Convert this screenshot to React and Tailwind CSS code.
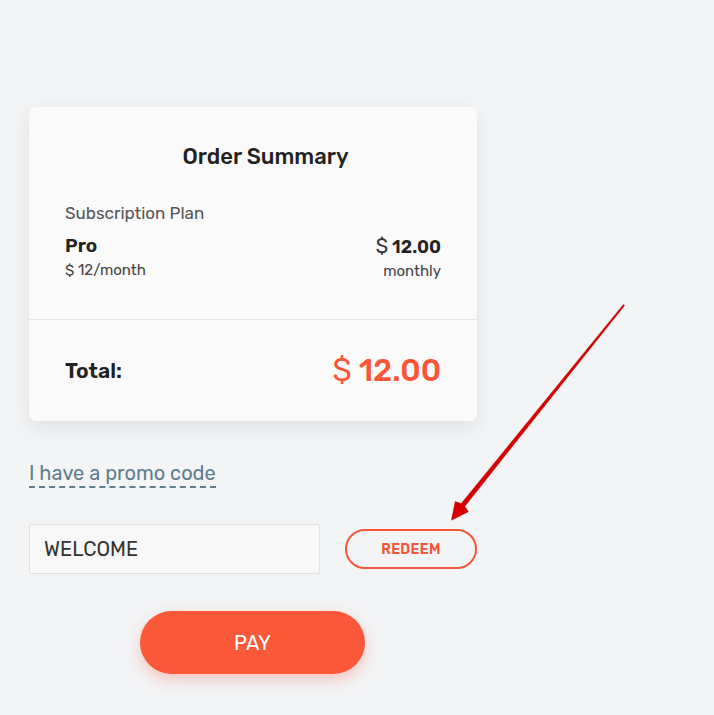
import React, { useState } from 'react';

const font = { fontFamily: '"Rubik", Inter, "Noto Sans", sans-serif' };

const PriceLine = ({ className, amount, dollarClass }) => (
  <span className={className}>
    <span className={dollarClass}>$</span> {amount}
  </span>
);

const Arrow = () => (
  <svg className="absolute left-0 top-0 pointer-events-none" width="714" height="715" viewBox="0 0 714 715">
    <path
      d="M624.6 305.4 L464.8 506.4 L468.4 511.8 L451.4 520.2 L455.2 501.4 L461.2 503.6 L623.4 304.4 Z"
      fill="#d80000"
      stroke="#c00000"
      strokeWidth="0.4"
      strokeLinejoin="round"
    />
  </svg>
);

export default function App() {
  const [code, setCode] = useState('WELCOME');

  return (
    <div className="relative w-[714px] h-[715px] bg-[#f3f4f6] overflow-hidden" style={font}>
      <div className="pt-[107px] pl-[29px] flex flex-col">
        <div className="w-[448px] bg-[#fafafa] rounded-[7px] shadow-[0_6px_18px_rgba(0,0,0,0.08)]">
          <div className="px-[36px] pt-[36px] pb-[38px]">
            <h2 className="pl-[25px] text-center text-[22px] font-medium text-[#222] leading-[28px]">Order Summary</h2>
            <div className="mt-[32px] text-[17px] text-[#555] leading-[20px]">Subscription Plan</div>
            <div className="mt-[12px] flex justify-between items-start">
              <div className="flex flex-col">
                <span className="text-[19px] font-semibold text-[#222] leading-[22px]">Pro</span>
                <span className="text-[15px] text-[#444] leading-[20px] mt-[3px]">$ 12/month</span>
              </div>
              <div className="flex flex-col items-end">
                <PriceLine className="text-[18px] font-semibold text-[#222] leading-[22px]" amount="12.00" dollarClass="font-normal text-[20px] text-[#333]" />
                <span className="text-[15px] text-[#444] leading-[20px] mt-[3px]">monthly</span>
              </div>
            </div>
          </div>
          <div className="h-px bg-[#e6e6e6]" />
          <div className="px-[36px] h-[101px] flex justify-between items-center">
            <span className="text-[21px] font-semibold text-[#222]">Total:</span>
            <PriceLine className="text-[31px] font-medium text-[#fa5537] leading-none" amount="12.00" dollarClass="font-normal" />
          </div>
        </div>

        <a href="#" className="mt-[40px] self-start text-[20px] text-[#5f7d8c] leading-[24px] pb-[1px] border-b-2 border-dashed border-[#5f7d8c]">
          I have a promo code
        </a>

        <div className="mt-[36px] flex items-center">
          <input
            value={code}
            onChange={(e) => setCode(e.target.value)}
            className="w-[291px] h-[50px] px-[14px] bg-[#f8f8f8] border border-[#e2e2e2] rounded-[2px] text-[20px] text-[#333] outline-none"
            style={font}
          />
          <button className="ml-[25px] w-[132px] h-[40px] rounded-full border-2 border-[#f5563a] text-[#f5563a] text-[14px] font-semibold tracking-wide">
            REDEEM
          </button>
        </div>

        <button className="mt-[37px] ml-[111px] w-[225px] h-[63px] rounded-full bg-[#fa5838] text-white text-[20px] shadow-[0_6px_14px_rgba(250,88,56,0.3)]">
          PAY
        </button>
      </div>
      <Arrow />
    </div>
  );
}
